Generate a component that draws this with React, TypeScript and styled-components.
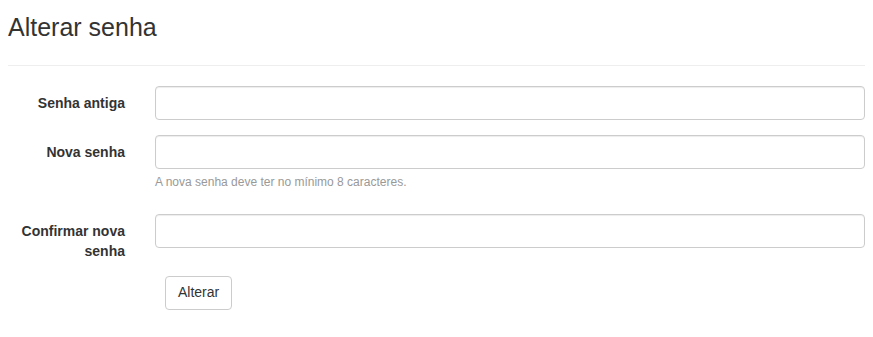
import React from "react";
import styled, { createGlobalStyle } from "styled-components";

const GlobalStyle = createGlobalStyle`
  body {
    margin: 8px;
    font-family: "Liberation Sans", Arial, sans-serif;
    font-size: 14px;
    line-height: 1.428571;
    color: #333;
    background: #fff;
  }
  * { box-sizing: border-box; }
`;

const PageHeader = styled.div`
  margin: 6px 0 20px;
  padding-bottom: 23px;
  border-bottom: 1px solid #eee;
`;

const Title = styled.h1`
  margin: 0;
  font-size: 25px;
  font-weight: 400;
  line-height: 1.1;
  color: #333;
`;

const FormGroup = styled.div<{ $mb?: number }>`
  display: grid;
  grid-template-columns: 117px 1fr;
  column-gap: 30px;
  margin-bottom: ${(p) => p.$mb ?? 15}px;
`;

const Label = styled.label`
  padding-top: 7px;
  text-align: right;
  font-weight: 700;
  line-height: 20px;
`;

const Field = styled.div`
  display: flex;
  flex-direction: column;
`;

const Input = styled.input`
  display: block;
  width: 100%;
  height: 34px;
  padding: 6px 12px;
  font: inherit;
  color: #555;
  background: #fff;
  border: 1px solid #ccc;
  border-radius: 4px;
  box-shadow: inset 0 1px 1px rgba(0, 0, 0, 0.075);
  outline: none;
`;

const Help = styled.span`
  display: block;
  margin-top: 5px;
  font-size: 12px;
  line-height: 17px;
  color: #999;
`;

const Actions = styled.div`
  display: flex;
  padding-left: 157px;
`;

const Button = styled.button`
  height: 34px;
  padding: 6px 12px;
  font: inherit;
  color: #333;
  background: #fff;
  border: 1px solid #ccc;
  border-radius: 4px;
  cursor: pointer;
`;

export default function App() {
  return (
    <>
      <GlobalStyle />
      <PageHeader>
        <Title>Alterar senha</Title>
      </PageHeader>
      <form onSubmit={(e) => e.preventDefault()}>
        <FormGroup>
          <Label htmlFor="old">Senha antiga</Label>
          <Field>
            <Input id="old" type="password" />
          </Field>
        </FormGroup>
        <FormGroup $mb={23}>
          <Label htmlFor="new">Nova senha</Label>
          <Field>
            <Input id="new" type="password" />
            <Help>A nova senha deve ter no mínimo 8 caracteres.</Help>
          </Field>
        </FormGroup>
        <FormGroup>
          <Label htmlFor="confirm">Confirmar nova senha</Label>
          <Field>
            <Input id="confirm" type="password" />
          </Field>
        </FormGroup>
        <Actions>
          <Button type="submit">Alterar</Button>
        </Actions>
      </form>
    </>
  );
}
